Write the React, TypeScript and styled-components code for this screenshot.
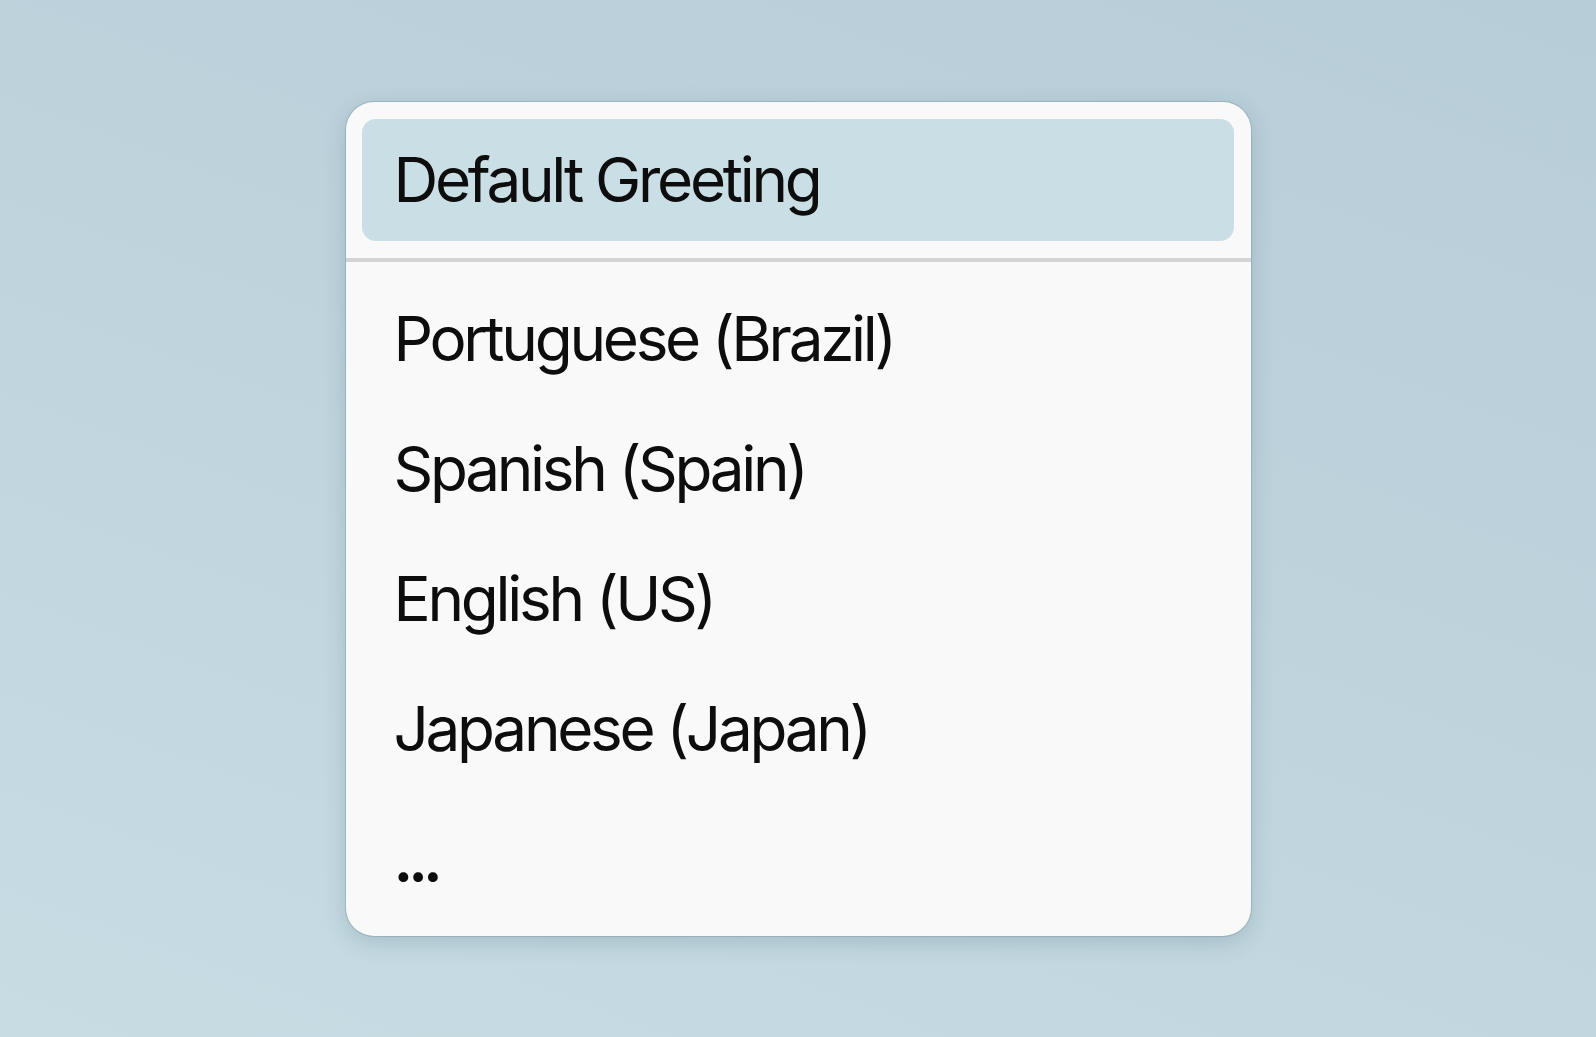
import React, { FC } from 'react'
import styled, { createGlobalStyle } from 'styled-components'

const GlobalStyle = createGlobalStyle`
	html, body {
		margin: 0;
		padding: 0;
		height: 100%;
	}
	body {
		font-family: Inter, "Noto Sans", "Liberation Sans", sans-serif;
		-webkit-font-smoothing: antialiased;
	}
	#root {
		height: 100%;
	}
`

const locales = [
	'Portuguese (Brazil)',
	'Spanish (Spain)',
	'English (US)',
	'Japanese (Japan)',
]

interface ItemProps {
	label: string
	active?: boolean
}

const MenuItem: FC<ItemProps> = ({ label, active }) => (
	<Item active={active}>{label}</Item>
)

const App: FC = () => (
	<>
		<GlobalStyle />
		<Backdrop>
			<Menu>
				<Highlighted>
					<MenuItem label="Default Greeting" active />
				</Highlighted>
				<Separator />
				<List>
					{locales.map(l => <MenuItem key={l} label={l} />)}
					<More>...</More>
				</List>
			</Menu>
		</Backdrop>
	</>
)

export default App

const Backdrop = styled.div`
	height: 100vh;
	display: flex;
	align-items: center;
	justify-content: center;
	background: linear-gradient(200deg, #b7cdd8 0%, #bed3dc 45%, #c7dce3 100%);
`

const Menu = styled.div`
	width: 905px;
	box-sizing: border-box;
	display: flex;
	flex-direction: column;
	background: #f9f9f9;
	border-radius: 28px;
	padding: 17px 0 12px;
	box-shadow:
		0 0 0 1px rgba(90, 125, 140, 0.28),
		0 6px 22px rgba(60, 95, 115, 0.22);
`

const Highlighted = styled.div`
	padding: 0 17px 0 16px;
`

const Item = styled.div<{ active?: boolean }>`
	height: ${({ active }) => active ? '122px' : '130px'};
	line-height: ${({ active }) => active ? '122px' : '130px'};
	padding: 0 32px;
	margin: ${({ active }) => active ? '0' : '0 16px'};
	border-radius: 14px;
	background: ${({ active }) => active ? '#cadee5' : 'transparent'};
	color: #0d0d0d;
	font-size: 62px;
	letter-spacing: -3.3px;
	white-space: nowrap;
`

const Separator = styled.div`
	height: 4px;
	margin: 17px 0 12px;
	background: #d2d4d5;
`

const List = styled.div`
	display: flex;
	flex-direction: column;
`

const More = styled(Item)`
	font-weight: 600;
	letter-spacing: -5px;
`
